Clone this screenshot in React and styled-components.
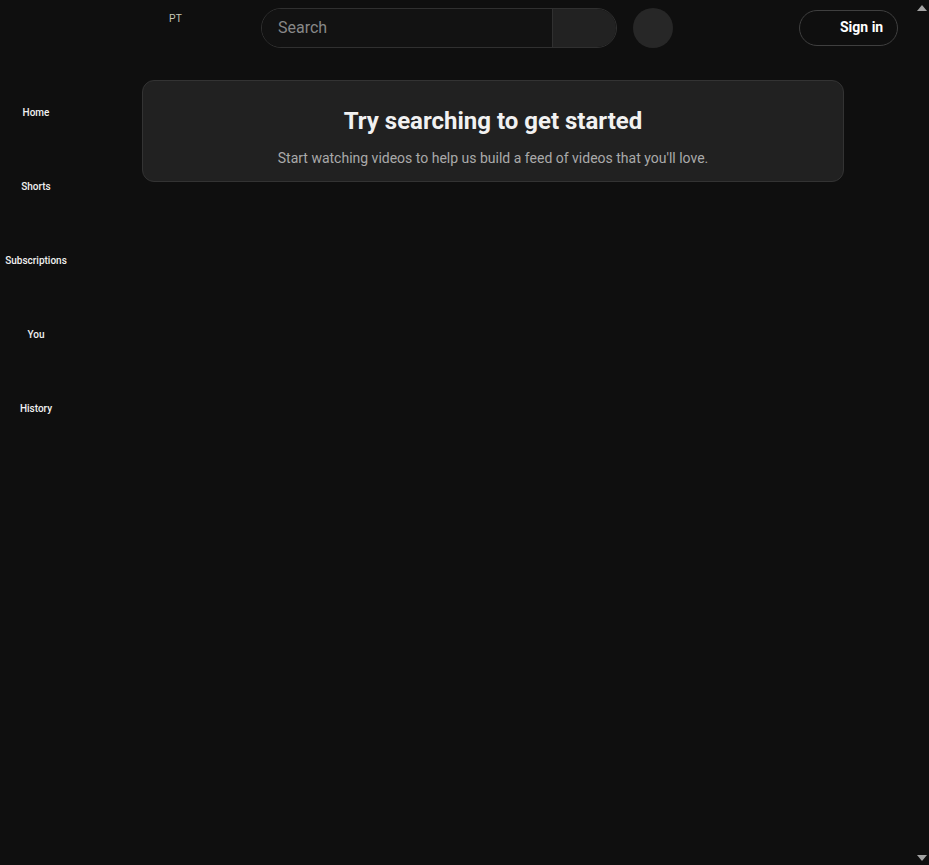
import styled, { createGlobalStyle } from 'styled-components'

const GlobalStyle = createGlobalStyle`
  html, body {
    margin: 0;
    background: #0f0f0f;
    color: #f1f1f1;
    font-family: Roboto, "Liberation Sans", Arial, sans-serif;
  }
  * {
    box-sizing: border-box;
  }
`

const navItems = ['Home', 'Shorts', 'Subscriptions', 'You', 'History']

export default function App() {
  return (
    <>
      <GlobalStyle />
      <Frame>
        <Page>
          <Header>
            <Start>
              <Logo>PT</Logo>
            </Start>
            <Center>
              <SearchForm>
                <SearchInput placeholder="Search" />
                <SearchButton aria-label="Search" />
              </SearchForm>
              <MicButton aria-label="Search with your voice" />
            </Center>
            <End>
              <SignIn>
                <IconSlot />
                Sign in
              </SignIn>
            </End>
          </Header>
          <Body>
            <Guide>
              {navItems.map((item) => (
                <GuideEntry key={item}>
                  <IconSpace />
                  <GuideLabel>{item}</GuideLabel>
                </GuideEntry>
              ))}
            </Guide>
            <Main>
              <Prompt>
                <PromptTitle>Try searching to get started</PromptTitle>
                <PromptText>Start watching videos to help us build a feed of videos that you'll love.</PromptText>
              </Prompt>
            </Main>
          </Body>
        </Page>
        <ScrollRail>
          <Arrow dir="up" />
          <Arrow dir="down" />
        </ScrollRail>
      </Frame>
    </>
  )
}

const Frame = styled.div`
  height: 100vh;
  display: flex;
  background: #0f0f0f;
`

const Page = styled.div`
  flex: 1;
  min-width: 0;
`

const ScrollRail = styled.div`
  width: 15px;
  flex: none;
  display: flex;
  flex-direction: column;
  align-items: center;
  justify-content: space-between;
  padding: 5px 0 4px;
`

const Arrow = styled.span`
  width: 0;
  height: 0;
  border-left: 5px solid transparent;
  border-right: 5px solid transparent;
  ${(p) => (p.dir === 'up' ? 'border-bottom' : 'border-top')}: 6px solid #a3a3a3;
`

const Header = styled.header`
  height: 56px;
  display: flex;
  align-items: center;
  padding: 0 16px;
`

const Start = styled.div`
  width: 245px;
  height: 56px;
  display: flex;
  align-items: flex-start;
  padding: 13px 0 0 153px;
`

const Logo = styled.span`
  font-size: 10px;
  line-height: 12px;
  color: #c9c9b8;
  font-family: "Liberation Sans", Arial, sans-serif;
`

const Center = styled.div`
  display: flex;
  align-items: center;
`

const SearchForm = styled.form`
  width: 356px;
  height: 40px;
  display: flex;
  border: 1px solid #303030;
  border-radius: 40px;
  overflow: hidden;
  margin: 0;
`

const SearchInput = styled.input`
  flex: 1;
  min-width: 0;
  background: #121212;
  border: none;
  outline: none;
  padding: 0 0 2px 16px;
  font-family: Roboto, "Liberation Sans", Arial, sans-serif;
  font-size: 16px;
  color: #f1f1f1;

  &::placeholder {
    color: #888888;
  }
`

const SearchButton = styled.button`
  width: 64px;
  border: none;
  border-left: 1px solid #303030;
  background: #222222;
  cursor: pointer;
`

const MicButton = styled.button`
  width: 40px;
  height: 40px;
  margin-left: 16px;
  border: none;
  border-radius: 50%;
  background: #272727;
`

const End = styled.div`
  margin-left: auto;
  display: flex;
  align-items: center;
`

const SignIn = styled.button`
  height: 36px;
  width: 99px;
  display: flex;
  align-items: center;
  gap: 6px;
  padding: 0 11px 2px 10px;
  border: 1px solid #3f3f3f;
  border-radius: 18px;
  background: transparent;
  color: #ffffff;
  font-family: Roboto, "Liberation Sans", Arial, sans-serif;
  font-size: 14px;
  font-weight: 700;
`

const IconSlot = styled.span`
  width: 24px;
  height: 24px;
  flex: none;
`

const Body = styled.div`
  display: flex;
`

const Guide = styled.nav`
  width: 72px;
  flex: none;
  padding-top: 4px;
  display: flex;
  flex-direction: column;
`

const GuideEntry = styled.a`
  height: 74px;
  display: flex;
  flex-direction: column;
  align-items: center;
  padding: 16px 0 14px;
`

const IconSpace = styled.span`
  width: 24px;
  height: 24px;
  margin-bottom: 6px;
`

const GuideLabel = styled.span`
  font-size: 10px;
  line-height: 14px;
  font-weight: 500;
  color: #f1f1f1;
  white-space: nowrap;
`

const Main = styled.main`
  flex: 1;
  padding-top: 24px;
  display: flex;
  justify-content: center;
`

const Prompt = styled.section`
  width: 702px;
  height: 102px;
  display: flex;
  flex-direction: column;
  align-items: center;
  padding-top: 24px;
  background: #212121;
  border: 1px solid #333333;
  border-radius: 12px;
`

const PromptTitle = styled.h2`
  margin: 0;
  font-size: 24px;
  line-height: 32px;
  font-weight: 700;
  color: #f1f1f1;
`

const PromptText = styled.p`
  margin: 11px 0 0;
  font-size: 14px;
  line-height: 20px;
  color: #aaaaaa;
`
